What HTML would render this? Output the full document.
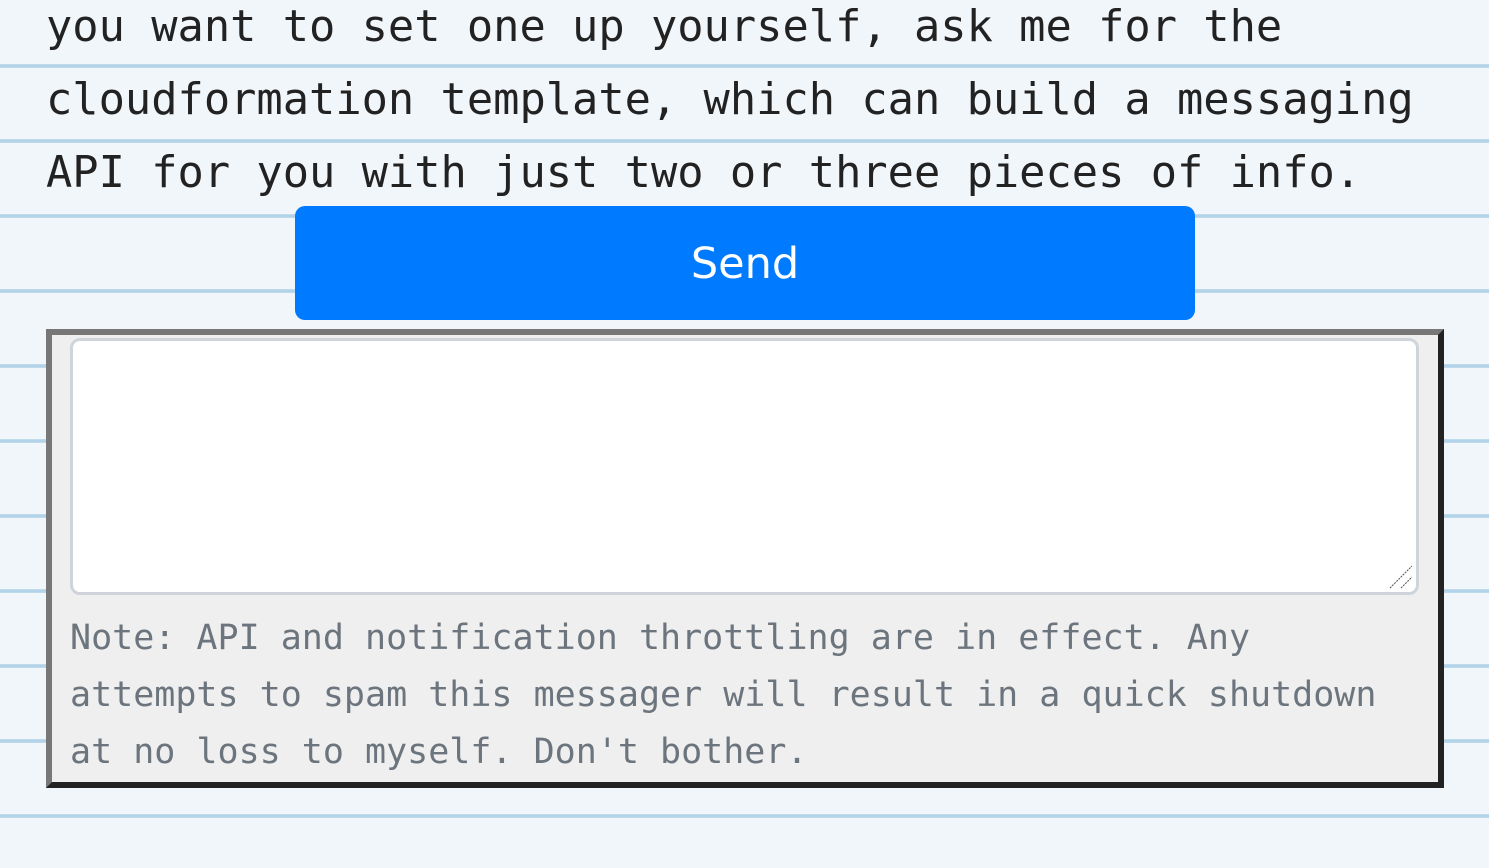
<!DOCTYPE html>
<html><head><meta charset="utf-8"><style>
html,body{margin:0;padding:0;}
body{width:1489px;height:868px;overflow:hidden;position:relative;
background-color:#f1f6fb;
background-image:repeating-linear-gradient(to bottom, transparent 0, transparent 64px, #c2deef 64px, #aed0e6 66px, #c2deef 68px, transparent 68px, transparent 75px);
background-position:0 0;}
.txt{position:absolute;left:46px;top:-10px;font-family:"DejaVu Sans Mono","Liberation Mono",monospace;font-size:43.7px;line-height:73px;color:#222;white-space:pre;}
.btn{position:absolute;left:295px;top:206px;width:900px;height:114px;background:#007bff;border-radius:10px;color:#fff;font-family:"DejaVu Sans","Liberation Sans",sans-serif;font-size:43px;text-align:center;line-height:116px;}
.box{position:absolute;left:46px;top:329px;width:1386px;height:447px;background:#efefef;border:6px solid;border-color:#777 #222 #222 #777;}
.ta{position:absolute;left:18px;top:3px;width:1343px;height:251px;background:#fff;border:3px solid #ced4da;border-radius:10px;}
.note{position:absolute;left:18px;top:275px;font-family:"DejaVu Sans Mono","Liberation Mono",monospace;font-size:35px;line-height:57px;color:#6c757d;white-space:pre;}
</style></head><body>
<div class="txt">you want to set one up yourself, ask me for the
cloudformation template, which can build a messaging
API for you with just two or three pieces of info.</div>
<div class="btn">Send</div>
<div class="box">
<div class="ta"><svg style="position:absolute;right:2px;bottom:2px" width="26" height="26"><path d="M2 24L24 2M13 24L24 13" stroke="#555" stroke-width="1" stroke-dasharray="2 1"/></svg></div>
<div class="note">Note: API and notification throttling are in effect. Any
attempts to spam this messager will result in a quick shutdown
at no loss to myself. Don't bother.</div>
</div>
</body></html>
